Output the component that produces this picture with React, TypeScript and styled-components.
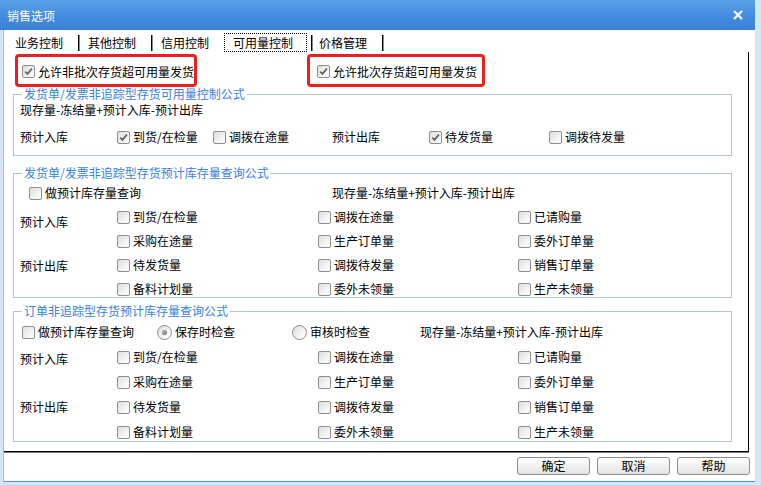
import React from 'react';
import styled, { createGlobalStyle } from 'styled-components';

const GlobalStyle = createGlobalStyle`
  * { box-sizing: border-box; }
  html, body {
    margin: 0;
    padding: 0;
    overflow: hidden;
    background: #d6e5f7;
  }
  body {
    font-family: "Noto Sans CJK SC", "Liberation Sans", sans-serif;
    font-size: 12px;
    color: #000;
  }
`;

const Window = styled.div`
  width: 761px;
  height: 485px;
  display: flex;
  flex-direction: column;
  padding: 0 6px 0 0;
  background: #d6e5f7;
`;

const TitleBar = styled.div`
  height: 30px;
  flex: none;
  display: flex;
  align-items: center;
  justify-content: space-between;
  padding: 0 11px 0 7px;
  background: linear-gradient(#5aa0ea, #4189dc 60%, #3b82d6);
  color: #fff;
  font-size: 12px;
`;

const CloseButton = styled.span`
  display: flex;
  width: 12px;
  height: 12px;
`;

const Body = styled.div`
  margin-left: 3px;
  height: 452px;
  display: flex;
  flex-direction: column;
  background: #fff;
  border-left: 1px solid #9dbde6;
  border-bottom: 1px solid #4e8fdd;
`;

const TabStrip = styled.div`
  height: 22px;
  flex: none;
  display: flex;
  align-items: center;
  padding: 3px 0 0 11px;
`;

const Tab = styled.span<{ $active?: boolean }>`
  height: 19px;
  display: flex;
  align-items: center;
  white-space: nowrap;
  padding: ${(p) => (p.$active ? '0 13px 0 8px' : '0')};
  margin-left: ${(p) => (p.$active ? '15px' : '0')};
  border: ${(p) => (p.$active ? '1px dotted #000' : 'none')};
`;

const Sep = styled.span<{ $afterActive?: boolean }>`
  width: 1px;
  height: 16px;
  background: #000;
  box-shadow: 1px 0 0 #8a8a8a;
  margin: ${(p) => (p.$afterActive ? '0 7px 0 4px' : '0 9px 0 15px')};
`;

const TabPanel = styled.div`
  width: 745px;
  height: 400px;
  flex: none;
  display: flex;
  flex-direction: column;
  padding-top: 2px;
  border-right: 1px solid #000;
  border-bottom: 1px solid #000;
  box-shadow: 0 1px 0 #7d7d7d;
`;

const TopRow = styled.div`
  height: 33px;
  display: flex;
  padding-left: 11px;
`;

const RedBox = styled.div<{ $width: number; $inset: number; $gap?: number }>`
  width: ${(p) => p.$width}px;
  margin-left: ${(p) => p.$gap ?? 0}px;
  display: flex;
  align-items: center;
  padding-left: ${(p) => p.$inset}px;
  padding-top: 2px;
  border: 3px solid #f01e1a;
  border-radius: 4px;
`;

const Group = styled.fieldset<{ $top: number; $bottom: number }>`
  margin: ${(p) => p.$top}px 0 0 9px;
  width: 719px;
  min-width: 0;
  padding: 0 6px ${(p) => p.$bottom}px 6px;
  border: 1px solid #b6c3d5;
`;

const Legend = styled.legend`
  color: #3a7fe6;
  line-height: 14px;
  padding: 0 2px;
  margin-left: 2px;
`;

const Formula = styled.div<{ $top?: number }>`
  line-height: 16px;
  margin-top: ${(p) => p.$top ?? 0}px;
  white-space: nowrap;
`;

const InlineRow = styled.div`
  margin-top: 11px;
  height: 16px;
  display: grid;
  grid-template-columns: 97px 96px 119px 97px 120px 1fr;
  align-items: center;
`;

const HeaderRow = styled.div<{ $height: number }>`
  margin-top: 6px;
  height: ${(p) => p.$height}px;
  display: flex;
  align-items: center;
`;

const Cell = styled.div<{ $width: number; $indent?: number }>`
  width: ${(p) => p.$width}px;
  flex: none;
  display: flex;
  align-items: center;
  padding-left: ${(p) => p.$indent ?? 0}px;
`;

const OptionGrid = styled.div<{ $gap: number }>`
  margin-top: 10px;
  display: grid;
  grid-template-columns: 97px 201px 200px 1fr;
  grid-template-rows: repeat(4, 14px);
  row-gap: ${(p) => p.$gap}px;
  align-items: center;
`;

const SideLabel = styled.span<{ $row: number; $col?: number; $shift: number }>`
  grid-row: ${(p) => p.$row};
  grid-column: 1;
  align-self: start;
  line-height: 14px;
  margin-top: ${(p) => p.$shift}px;
  white-space: nowrap;
`;

const PlainLabel = styled.span`
  line-height: 14px;
  white-space: nowrap;
`;

const ItemLabel = styled.label<{ $row?: number; $col?: number }>`
  display: inline-flex;
  align-items: center;
  gap: 3px;
  line-height: 14px;
  white-space: nowrap;
  ${(p) => (p.$row ? `grid-row: ${p.$row};` : '')}
  ${(p) => (p.$col ? `grid-column: ${p.$col};` : '')}
`;

const Box = styled.span`
  width: 13px;
  height: 13px;
  flex: none;
  display: flex;
  align-items: center;
  justify-content: center;
  border: 1px solid #8f8f8f;
  border-radius: 2px;
  background: linear-gradient(135deg, #dedede, #f7f7f7 70%, #ffffff);
`;

const RadioCircle = styled.span`
  width: 15px;
  height: 15px;
  flex: none;
  display: flex;
  align-items: center;
  justify-content: center;
  border: 1px solid #8c8c8c;
  border-radius: 50%;
  background: linear-gradient(135deg, #dcdcdc, #f8f8f8 70%, #fff);
`;

const RadioDot = styled.span`
  width: 5px;
  height: 5px;
  border-radius: 50%;
  background: radial-gradient(circle at 35% 35%, #b5b5b5, #5c5c5c);
`;

const ButtonRow = styled.div`
  flex: 1;
  display: flex;
  justify-content: flex-end;
  align-items: flex-start;
  gap: 7px;
  padding: 5px 5px 0 0;
`;

const DialogButton = styled.button`
  width: 73px;
  height: 18px;
  padding: 0;
  font: inherit;
  font-size: 12px;
  line-height: 16px;
  color: #000;
  border: 1px solid #8d8d8d;
  border-radius: 3px;
  background: linear-gradient(#ffffff, #f1f1f1 50%, #e3e3e3);
`;

const CheckBox: React.FC<{ label: string; checked?: boolean; row?: number; col?: number }> = ({
  label,
  checked,
  row,
  col,
}) => (
  <ItemLabel $row={row} $col={col}>
    <Box>
      {checked && (
        <svg width="9" height="9" viewBox="0 0 9 9">
          <path d="M1.2 4.6 L3.5 6.9 L7.9 1.6" fill="none" stroke="#666" strokeWidth="1.8" />
        </svg>
      )}
    </Box>
    <span>{label}</span>
  </ItemLabel>
);

const Radio: React.FC<{ label: string; checked?: boolean }> = ({ label, checked }) => (
  <ItemLabel>
    <RadioCircle>{checked && <RadioDot />}</RadioCircle>
    <span>{label}</span>
  </ItemLabel>
);

const formula = '现存量-冻结量+预计入库-预计出库';

const columns = [
  ['到货/在检量', '采购在途量', '待发货量', '备料计划量'],
  ['调拨在途量', '生产订单量', '调拨待发量', '委外未领量'],
  ['已请购量', '委外订单量', '销售订单量', '生产未领量'],
];

const OptionCells: React.FC = () => (
  <>
    {columns.map((items, c) =>
      items.map((item, r) => <CheckBox key={`${c}-${r}`} label={item} row={r + 1} col={c + 2} />)
    )}
  </>
);

const tabs = [
  { label: '业务控制', sep: true },
  { label: '其他控制', sep: true },
  { label: '信用控制', sep: false },
  { label: '可用量控制', sep: true, active: true },
  { label: '价格管理', sep: true },
];

const App: React.FC = () => {
  return (
    <>
      <GlobalStyle />
      <Window>
        <TitleBar>
          <span>销售选项</span>
          <CloseButton>
            <svg width="12" height="12" viewBox="0 0 12 12">
              <path d="M2 2 L10 10 M10 2 L2 10" stroke="#fff" strokeWidth="2.2" />
            </svg>
          </CloseButton>
        </TitleBar>
        <Body>
          <TabStrip>
            {tabs.map((t) => (
              <React.Fragment key={t.label}>
                <Tab $active={t.active}>{t.label}</Tab>
                {t.sep && <Sep $afterActive={t.active} />}
              </React.Fragment>
            ))}
          </TabStrip>

          <TabPanel>
            <TopRow>
              <RedBox $width={182} $inset={4}>
                <CheckBox label="允许非批次存货超可用量发货" checked />
              </RedBox>
              <RedBox $width={178} $inset={7} $gap={110}>
                <CheckBox label="允许批次存货超可用量发货" checked />
              </RedBox>
            </TopRow>

            <Group $top={0} $bottom={10}>
              <Legend>发货单/发票非追踪型存货可用量控制公式</Legend>
              <Formula $top={1}>{formula}</Formula>
              <InlineRow>
                <PlainLabel>预计入库</PlainLabel>
                <CheckBox label="到货/在检量" checked />
                <CheckBox label="调拨在途量" />
                <PlainLabel>预计出库</PlainLabel>
                <CheckBox label="待发货量" checked />
                <CheckBox label="调拨待发量" />
              </InlineRow>
            </Group>

            <Group $top={10} $bottom={1}>
              <Legend>发货单/发票非追踪型存货预计库存量查询公式</Legend>
              <HeaderRow $height={14}>
                <Cell $width={312} $indent={9}>
                  <CheckBox label="做预计库存量查询" />
                </Cell>
                <Formula>{formula}</Formula>
              </HeaderRow>
              <OptionGrid $gap={10}>
                <SideLabel $row={1} $shift={5}>预计入库</SideLabel>
                <SideLabel $row={3} $shift={1}>预计出库</SideLabel>
                <OptionCells />
              </OptionGrid>
            </Group>

            <Group $top={6} $bottom={2}>
              <Legend>订单非追踪型存货预计库存量查询公式</Legend>
              <HeaderRow $height={16}>
                <Cell $width={137} $indent={2}>
                  <CheckBox label="做预计库存量查询" />
                </Cell>
                <Cell $width={135}>
                  <Radio label="保存时检查" checked />
                </Cell>
                <Cell $width={128}>
                  <Radio label="审核时检查" />
                </Cell>
                <Formula>{formula}</Formula>
              </HeaderRow>
              <OptionGrid $gap={11}>
                <SideLabel $row={1} $shift={2}>预计入库</SideLabel>
                <SideLabel $row={3} $shift={0}>预计出库</SideLabel>
                <OptionCells />
              </OptionGrid>
            </Group>
          </TabPanel>

          <ButtonRow>
            <DialogButton>确定</DialogButton>
            <DialogButton>取消</DialogButton>
            <DialogButton>帮助</DialogButton>
          </ButtonRow>
        </Body>
      </Window>
    </>
  );
};

export default App;
